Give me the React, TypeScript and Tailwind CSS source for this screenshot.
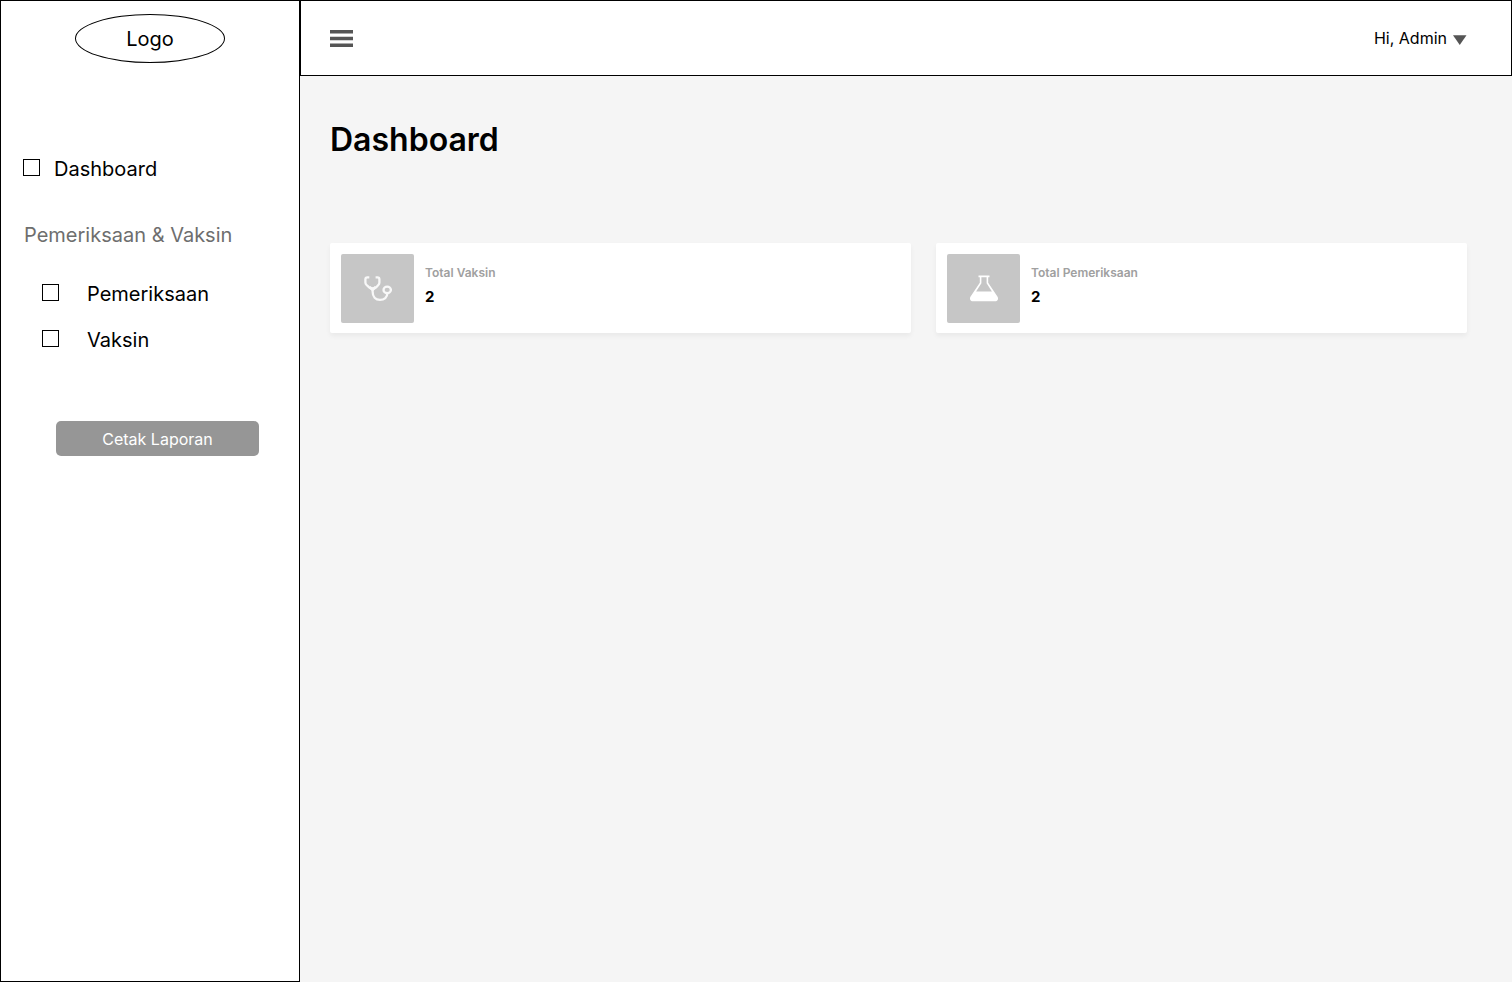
import type { ReactNode } from "react";

function StethoscopeIcon() {
  return (
    <svg width="29" height="27" viewBox="8 10 29 27" fill="none" stroke="#f8f8f8" strokeWidth="2.300" aria-hidden="true">
      <path d="M14.300 12.300h-1.900c-1.300 0-2 .6-2 1.900v3.200c0 1 .4 1.800 1.200 2.600l2.300 2.200c1 .9 2.100 1.300 3.700 1.300s2.700-.4 3.700-1.300l2-2.200c.7-.8 1.100-1.600 1.100-2.600v-3.200c0-1.300-.7-1.900-2-1.900h-1.800" />
      <path d="M17.600 23.200v3.400c0 5.200 3 8.300 7.400 8.300s7.300-2.800 7.300-6.300" />
      <path strokeWidth="2.800" d="M14.400 22l3.200 2.600 3.200-2.600" />
      <ellipse cx="32.200" cy="24.900" rx="3.700" ry="3.200" />
    </svg>
  );
}

function FlaskIcon() {
  return (
    <svg width="28" height="27" viewBox="8 9 28 27" aria-hidden="true">
      <path
        fill="#ffffff"
        fillRule="evenodd"
        d="M16.500 9.500h11v1.700h-1.300v5.500l9.200 13.700c1.500 2.500.2 4.900-2.600 4.900H11.200c-2.800 0-4.100-2.400-2.600-4.900l9.200-13.700v-5.500h-1.300zM19.400 11.200v6l-5.300 8.200h15.800l-5.300-8.200v-6z"
      />
    </svg>
  );
}

function StatCard({ label, value, icon }: { label: string; value: number; icon: ReactNode }) {
  return (
    <article className="flex gap-[11px] rounded-xs bg-white p-[11px] pb-[10px] shadow-[0_3px_5px_rgba(0,0,0,0.05)]">
      <div className="flex h-[69px] w-[73px] shrink-0 items-center justify-center rounded-xs bg-[#c6c6c6]">{icon}</div>
      <div className="pt-[11px]">
        <h2 className="text-xs leading-4 font-semibold text-[#a0a0a0]">{label}</h2>
        <p className="mt-1.5 text-[15px] leading-5 font-bold">{value}</p>
      </div>
    </article>
  );
}

function NavItem({ label, className }: { label: string; className: string }) {
  return (
    <label className={`flex items-start text-xl leading-6 ${className}`}>
      <input type="checkbox" className="mt-0.5 size-[17px] shrink-0 appearance-none border border-black bg-white checked:bg-black" />
      {label}
    </label>
  );
}

export default function App() {
  return (
    <div className="flex min-h-screen bg-[#f5f5f5] font-['Inter',sans-serif] text-black">
      <aside className="w-[300px] shrink-0 border border-black bg-white">
        <div className="mx-auto mt-[13px] flex h-[49px] w-[150px] items-center justify-center rounded-[50%] border border-black text-xl leading-6">
          Logo
        </div>
        <nav className="mt-[94px]">
          <NavItem label="Dashboard" className="ml-[22px] gap-3.5" />
          <h2 className="mt-[42px] ml-[23px] text-xl leading-6 text-[#6e6e6e]">Pemeriksaan &amp; Vaksin</h2>
          <div className="mt-[35px] ml-[41px] flex flex-col gap-[22px]">
            <NavItem label="Pemeriksaan" className="gap-7" />
            <NavItem label="Vaksin" className="gap-7" />
          </div>
        </nav>
        <button
          type="button"
          className="mt-[69px] ml-[55px] flex h-[35px] w-[203px] items-center justify-center rounded-[5px] bg-[#969696] text-base text-white"
        >
          Cetak Laporan
        </button>
      </aside>
      <div className="flex min-w-0 flex-1 flex-col">
        <header className="flex h-[76px] items-center justify-between border border-black bg-white pr-11 pl-[29px]">
          <button type="button" aria-label="Menu">
            <svg width="23" height="17" viewBox="0 0 23 17" fill="#555555" aria-hidden="true">
              <path d="M0 0h23v3.400H0zM0 6.800h23v3.400H0zM0 13.600h23V17H0z" />
            </svg>
          </button>
          <button type="button" className="flex items-center gap-1.5 text-base">
            Hi, Admin
            <svg width="14" height="14" viewBox="0 0 14 14" fill="#555555" aria-hidden="true">
              <path d="M0 4.200h13.500L6.750 14z" />
            </svg>
          </button>
        </header>
        <main className="pt-11 pr-[45px] pl-[30px]">
          <h1 className="text-[32px] leading-10 font-semibold">Dashboard</h1>
          <div className="mt-[83px] grid grid-cols-[581fr_531fr] gap-[25px]">
            <StatCard label="Total Vaksin" value={2} icon={<StethoscopeIcon />} />
            <StatCard label="Total Pemeriksaan" value={2} icon={<FlaskIcon />} />
          </div>
        </main>
      </div>
    </div>
  );
}
